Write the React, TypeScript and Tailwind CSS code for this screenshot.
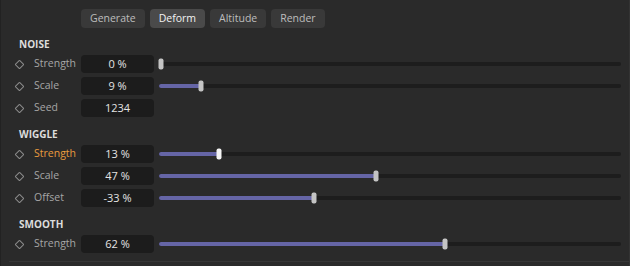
import React from "react";

type Row = {
  label: string;
  value: string;
  pct?: number;
  active?: boolean;
};

type Section = { title: string; rows: Row[] };

const sections: Section[] = [
  {
    title: "NOISE",
    rows: [
      { label: "Strength", value: "0 %", pct: 0 },
      { label: "Scale", value: "9 %", pct: 9 },
      { label: "Seed", value: "1234" },
    ],
  },
  {
    title: "WIGGLE",
    rows: [
      { label: "Strength", value: "13 %", pct: 13, active: true },
      { label: "Scale", value: "47 %", pct: 47 },
      { label: "Offset", value: "-33 %", pct: 33.5 },
    ],
  },
  {
    title: "SMOOTH",
    rows: [{ label: "Strength", value: "62 %", pct: 62 }],
  },
];

const tabs = ["Generate", "Deform", "Altitude", "Render"];

function Slider({ pct, active }: { pct: number; active?: boolean }) {
  return (
    <div className="relative h-[4px] flex-1 rounded-full bg-[#1d1d1d]">
      {pct > 0 && (
        <div
          className="absolute left-0 top-0 h-full rounded-full bg-[#6565a6]"
          style={{ width: `${pct}%` }}
        />
      )}
      <div
        className={`absolute top-1/2 h-[11px] w-[5px] -translate-x-1/2 -translate-y-1/2 rounded-[2px] ${
          active ? "bg-[#f4f4f4]" : "bg-[#c4c4c4]"
        }`}
        style={{ left: `max(2px, ${pct}%)` }}
      />
    </div>
  );
}

function ParamRow({ row }: { row: Row }) {
  return (
    <div className="flex h-[22px] items-center">
      <div className="flex w-[33px] items-center pl-[15px]">
        <div className="h-[7px] w-[7px] rotate-45 rounded-[1px] border border-[#8c8c8c]" />
      </div>
      <div
        className={`w-[47px] text-[10.5px] ${
          row.active ? "text-[#e99b3e]" : "text-[#a6a6a6]"
        }`}
      >
        {row.label}
      </div>
      <div className="flex h-[18px] w-[73px] items-center justify-center rounded-[4px] bg-[#1c1c1c] text-[11px] text-[#e4e4e4]">
        {row.value}
      </div>
      <div className="ml-[5px] mr-[8px] flex flex-1 items-center">
        {row.pct !== undefined && <Slider pct={row.pct} active={row.active} />}
      </div>
    </div>
  );
}

export default function App() {
  return (
    <div
      className="h-[266px] w-[630px] overflow-hidden border-l border-r border-l-[#222] border-r-[#333] bg-[#2a2a2a]"
      style={{ fontFamily: '"Open Sans", "Noto Sans", sans-serif' }}
    >
      {/* Tabs */}
      <div className="flex gap-[5px] pl-[80px] pt-[9px]">
        {tabs.map((t) => (
          <div
            key={t}
            className={`flex h-[19px] items-center rounded-[4px] px-[9px] text-[10.5px] ${
              t === "Deform"
                ? "bg-[#4a4a4a] text-[#f2f2f2]"
                : "bg-[#393939] text-[#bdbdbd]"
            }`}
          >
            {t}
          </div>
        ))}
      </div>

      <div className="mt-[7px] flex flex-col gap-[6px]">
        {sections.map((s) => (
          <div key={s.title}>
            <div className="flex h-[18px] items-center pl-[18px] text-[10px] font-bold text-[#dcdcdc]">
              {s.title}
            </div>
            {s.rows.map((r, i) => (
              <ParamRow key={i} row={r} />
            ))}
          </div>
        ))}
      </div>

      <div className="ml-[8px] mt-[6px] border-t border-[#363636]" />
    </div>
  );
}
